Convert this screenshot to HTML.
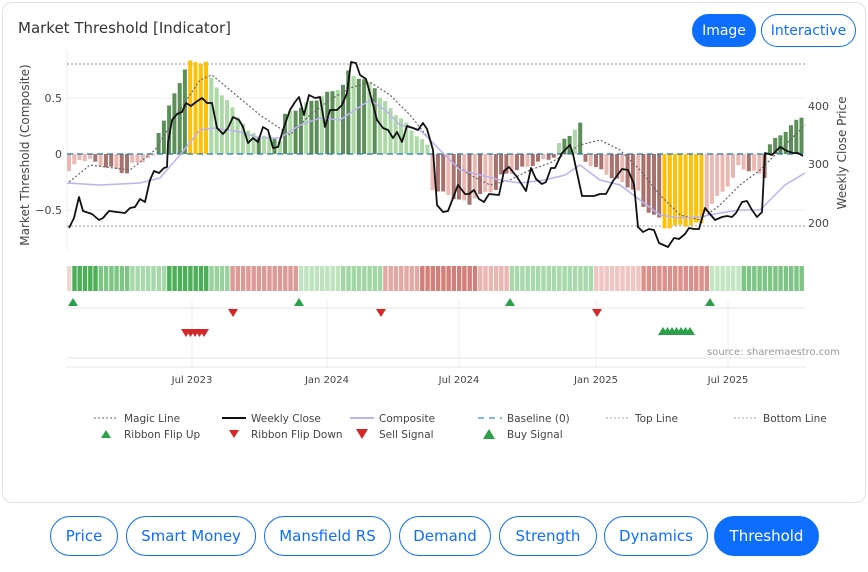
<!DOCTYPE html>
<html><head><meta charset="utf-8">
<style>
*{box-sizing:border-box;margin:0;padding:0}
body{width:868px;height:572px;background:#fff;font-family:"DejaVu Sans","Liberation Sans",sans-serif;position:relative;overflow:hidden}
.card{position:absolute;left:2px;top:2px;width:864px;height:501px;border:1px solid #dee2e6;border-radius:10px}
.title{position:absolute;left:18px;top:19px;font-size:15px;color:#333}
.btn{position:absolute;border:1px solid #0d6efd;color:#0d6efd;border-radius:20px;font-size:15px;display:flex;align-items:center;justify-content:center;background:#fff}
.btn.on{background:#0d6efd;color:#fff}
svg{position:absolute;left:0;top:0}
</style></head><body>
<div class="card"></div>
<div class="title">Market Threshold [Indicator]</div>
<div class="btn on" style="left:692px;top:14px;width:64px;height:33px;font-size:14px">Image</div>
<div class="btn" style="left:761px;top:14px;width:95px;height:33px;font-size:14px">Interactive</div>
<svg id="c" width="868" height="500" font-family="DejaVu Sans, Liberation Sans, sans-serif"></svg>
<div class="btn" style="left:50px;top:516px;width:68px;height:40px">Price</div>
<div class="btn" style="left:126px;top:516px;width:130px;height:40px">Smart Money</div>
<div class="btn" style="left:264px;top:516px;width:127px;height:40px">Mansfield RS</div>
<div class="btn" style="left:399px;top:516px;width:92px;height:40px">Demand</div>
<div class="btn" style="left:499px;top:516px;width:98px;height:40px">Strength</div>
<div class="btn" style="left:604px;top:516px;width:104px;height:40px">Dynamics</div>
<div class="btn on" style="left:714px;top:516px;width:105px;height:40px">Threshold</div>
<script>
const s=document.getElementById('c');let h='';
const X0=67,X1=805,Y0=154,K=112;
[98,210].forEach(y=>h+=`<line x1="${X0}" x2="${X1}" y1="${y}" y2="${y}" stroke="#eee"/>`);
h+=`<line x1="${X0}" x2="${X0}" y1="50" y2="250" stroke="#eee"/>`;
[192,327,459,596,728].forEach(x=>h+=`<line x1="${x}" x2="${x}" y1="300" y2="368" stroke="#eee"/>`);
[308,358,367].forEach(y=>h+=`<line x1="${X0}" x2="${X1}" y1="${y}" y2="${y}" stroke="#e6e6e6"/>`);
h+=`<line x1="${X0}" x2="${X1}" y1="64" y2="64" stroke="#999" stroke-dasharray="2,2"/>`;
h+=`<line x1="${X0}" x2="${X1}" y1="226" y2="226" stroke="#999" stroke-dasharray="2,2"/>`;
const DG='#5c8f58',LG='#acd9a5',YE='#ffc107',BR='#a8716c',PK='#eab8b2';
const seg=[[67,75,-0.17,-0.1,PK],[75,95,-0.05,-0.05,PK],[95,130,-0.08,-0.18,BR+'|'+PK],[130,155,-0.1,-0.02,PK],
[155,185,0.12,0.76,DG],[185,207,0.82,0.82,YE],[207,245,0.72,0.25,LG],[245,285,0.2,0.12,LG+'|'+DG],
[285,345,0.35,0.62,DG+'|'+LG],[345,375,0.75,0.6,DG+'|'+LG],[375,430,0.55,0.05,LG],
[430,470,-0.3,-0.45,BR+'|'+PK],[470,500,-0.4,-0.3,PK+'|'+BR],[500,555,-0.2,-0.02,BR+'|'+PK],
[555,582,0.05,0.28,DG+'|'+LG],[582,640,-0.05,-0.35,BR+'|'+PK],[640,662,-0.45,-0.6,BR],
[662,702,-0.66,-0.62,YE],[702,735,-0.55,-0.2,PK],[735,765,-0.1,-0.2,PK+'|'+BR],[765,805,0.05,0.36,DG]];
const step=5.27;let i=0;
for(let x=X0;x<X1-2;x+=step,i++){
  const c=x+2;const sg=seg.find(q=>c>=q[0]&&c<q[1])||seg[seg.length-1];
  const t=(c-sg[0])/(sg[1]-sg[0]);const v=sg[2]+(sg[3]-sg[2])*t+0.015*Math.sin(i*1.7);
  const cols=sg[4].split('|');const col=cols[i%3===0&&cols.length>1?1:0];
  const y=Y0-v*K;h+=`<rect x="${x.toFixed(1)}" y="${Math.min(y,Y0).toFixed(1)}" width="4" height="${Math.abs(y-Y0).toFixed(1)}" fill="${col}"/>`;
}
h+=`<line x1="${X0}" x2="${X1}" y1="${Y0}" y2="${Y0}" stroke="#1f77b4" stroke-dasharray="6,4" stroke-width="1.3"/>`;
const magic=[[69,182],[90,165],[130,170],[155,150],[180,110],[200,80],[212,75],[230,90],[260,115],[290,135],[310,115],[330,100],[350,88],[370,82],[390,95],[410,115],[430,140],[450,160],[470,175],[490,185],[510,180],[530,170],[550,163],[580,145],[600,140],[620,150],[640,170],[660,195],[680,215],[700,220],[720,205],[740,185],[760,170],[780,150],[805,125]];
h+=`<polyline points="${magic.join(' ')}" fill="none" stroke="#666" stroke-width="1.2" stroke-dasharray="2,2"/>`;
const comp=[[67,183],[100,185],[140,183],[160,178],[180,155],[200,130],[215,128],[240,132],[260,138],[280,138],[300,125],[320,118],[340,120],[355,110],[370,100],[385,110],[400,125],[420,130],[440,150],[460,170],[480,175],[500,180],[520,183],[545,180],[565,175],[580,165],[600,180],[620,185],[640,200],[660,215],[680,218],[700,217],[720,213],[740,210],[760,210],[770,200],[785,185],[805,173]];
h+=`<polyline points="${comp.join(' ')}" fill="none" stroke="#bdb2f0" stroke-width="1.5"/>`;
const wk=[[69,228],[74,218],[79,197],[83,211],[92,214],[99,220],[103,218],[109,211],[117,212],[125,213],[130,208],[135,207],[140,199],[145,202],[150,180],[154,171],[159,173],[164,168],[167,167],[168,143],[172,120],[177,114],[182,112],[186,103],[191,106],[196,102],[202,98],[207,103],[212,103],[217,128],[223,134],[228,128],[233,117],[239,120],[243,127],[248,143],[253,138],[258,142],[263,127],[268,130],[273,148],[278,147],[283,130],[290,110],[295,102],[299,97],[304,115],[309,95],[315,98],[320,97],[325,127],[330,110],[337,110],[342,105],[347,93],[351,62],[356,63],[360,75],[366,79],[371,97],[377,120],[383,128],[388,130],[393,138],[397,132],[402,142],[407,126],[413,128],[418,130],[423,123],[427,129],[433,150],[437,205],[443,212],[448,211],[458,185],[465,194],[469,194],[474,190],[479,199],[484,202],[489,194],[499,195],[504,171],[509,167],[517,177],[526,191],[531,168],[536,179],[542,184],[546,182],[551,168],[555,168],[562,153],[570,145],[573,154],[582,196],[594,196],[600,194],[606,194],[613,181],[622,169],[628,170],[634,184],[638,227],[643,232],[649,229],[654,230],[659,243],[668,247],[674,238],[679,239],[685,234],[689,228],[694,229],[699,229],[705,208],[710,214],[715,220],[722,217],[727,216],[732,217],[736,213],[742,202],[747,201],[752,210],[757,217],[762,212],[765,153],[772,155],[780,147],[787,151],[793,153],[798,153],[803,156]];
h+=`<polyline points="${wk.join(' ')}" fill="none" stroke="#111" stroke-width="1.8" stroke-linejoin="round"/>`;
h+=`<g font-size="11" fill="#444" text-anchor="end"><text x="62" y="102">0.5</text><text x="62" y="158">0</text><text x="62" y="214">−0.5</text></g>`;
h+=`<g font-size="11" fill="#444"><text x="808" y="110">400</text><text x="808" y="168">300</text><text x="808" y="227">200</text></g>`;
h+=`<text transform="translate(29,155) rotate(-90)" font-size="12" fill="#444" text-anchor="middle">Market Threshold (Composite)</text>`;
h+=`<text transform="translate(846,153) rotate(-90)" font-size="12" fill="#444" text-anchor="middle">Weekly Close Price</text>`;
const rib=[[67,70,'#f2d6d3'],[70,100,'#4caf58'],[100,130,'#7cc585'],[130,165,'#a8d9ab'],[165,210,'#4caf58'],[210,230,'#9ad29f'],[230,297,'#dc9a96'],[297,340,'#bfe3bf'],[340,380,'#a2d6a5'],[380,420,'#e2a8a4'],[420,480,'#d27f7a'],[480,507,'#e9b7b3'],[507,595,'#a8d9ab'],[595,640,'#efc6c3'],[640,707,'#da918c'],[707,740,'#c3e6c3'],[740,805,'#7cc585']];
for(let x=X0;x<X1-1;x+=5.27){const r=rib.find(q=>x+2>=q[0]&&x+2<q[1])||rib[rib.length-1];h+=`<rect x="${x.toFixed(1)}" y="266" width="4.4" height="25" fill="${r[2]}"/>`;}
const up=(x,y,c)=>`<polygon points="${x-5},${y+4} ${x+5},${y+4} ${x},${y-4}" fill="${c}"/>`;
const dn=(x,y,c)=>`<polygon points="${x-5},${y-4} ${x+5},${y-4} ${x},${y+4}" fill="${c}"/>`;
[73,299,510,710].forEach(x=>h+=up(x,302,'#2ca048'));
[233,381,597].forEach(x=>h+=dn(x,313,'#d62728'));
for(let x=186;x<=208;x+=4.5)h+=dn(x,333,'#d62728');
for(let x=663;x<=691;x+=4.5)h+=up(x,331,'#2ca048');
h+=`<text x="840" y="355" font-size="10" fill="#999" text-anchor="end">source: sharemaestro.com</text>`;
h+=`<g font-size="10" fill="#444" text-anchor="middle"><text x="192" y="383">Jul 2023</text><text x="327" y="383">Jan 2024</text><text x="459" y="383">Jul 2024</text><text x="596" y="383">Jan 2025</text><text x="728" y="383">Jul 2025</text></g>`;
h+=`<g font-size="10.5" fill="#444">
<line x1="94" x2="118" y1="418" y2="418" stroke="#666" stroke-dasharray="2,2"/><text x="124" y="422">Magic Line</text>
<line x1="222" x2="246" y1="418" y2="418" stroke="#111" stroke-width="2"/><text x="251" y="422">Weekly Close</text>
<line x1="350" x2="374" y1="418" y2="418" stroke="#bdb2f0" stroke-width="2"/><text x="379" y="422">Composite</text>
<line x1="478" x2="502" y1="418" y2="418" stroke="#5aa0d0" stroke-width="1.5" stroke-dasharray="6,5"/><text x="507" y="422">Baseline (0)</text>
<line x1="606" x2="630" y1="418" y2="418" stroke="#aaa" stroke-dasharray="2,2"/><text x="635" y="422">Top Line</text>
<line x1="734" x2="758" y1="418" y2="418" stroke="#aaa" stroke-dasharray="2,2"/><text x="763" y="422">Bottom Line</text>
<text x="124" y="438">Ribbon Flip Up</text><text x="251" y="438">Ribbon Flip Down</text><text x="379" y="438">Sell Signal</text><text x="507" y="438">Buy Signal</text></g>`;
h+=up(106,434,'#2ca048')+dn(234,434,'#d62728')+`<polygon points="356,429 368,429 362,439" fill="#d62728"/><polygon points="483,439 495,439 489,429" fill="#2ca048"/>`;
s.innerHTML=h;
</script>
</body></html>
